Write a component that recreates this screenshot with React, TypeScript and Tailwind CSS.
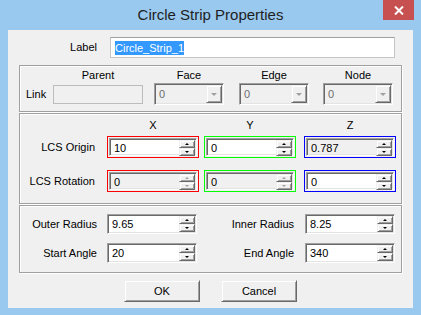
import React from 'react';

const font = { fontFamily: '"Liberation Sans", Arial, sans-serif' };

const sunken =
  'border border-t-[#a0a0a0] border-l-[#a0a0a0] border-r-white border-b-white shadow-[inset_1px_1px_0_#696969,inset_-1px_-1px_0_#e3e3e3]';

const raised =
  'border border-t-[#f0f0f0] border-l-[#f0f0f0] border-r-[#696969] border-b-[#696969] shadow-[inset_1px_1px_0_#ffffff,inset_-1px_-1px_0_#a0a0a0] bg-[#f0f0f0]';

const Arrow = ({ up, off }: { up?: boolean; off?: boolean }) => (
  <span
    className={
      up
        ? `w-0 h-0 border-x-[2px] border-x-transparent border-b-[2px] ${off ? 'border-b-[#a0a0a0]' : 'border-b-black'}`
        : `w-0 h-0 border-x-[2px] border-x-transparent border-t-[2px] ${off ? 'border-t-[#a0a0a0]' : 'border-t-black'}`
    }
  />
);

const Spinner = ({ off }: { off?: boolean }) => (
  <div className="flex flex-col w-[16px] h-[16px] mr-[1px] mt-[1px]">
    <div className={`${raised} h-[8px] flex items-center justify-center`}>
      <Arrow up off={off} />
    </div>
    <div className={`${raised} h-[8px] flex items-center justify-center`}>
      <Arrow off={off} />
    </div>
  </div>
);

const SpinField = ({
  value,
  gray,
  off,
  w,
}: {
  value: string;
  gray?: boolean;
  off?: boolean;
  w: string;
}) => (
  <div className={`${sunken} ${w} h-full flex items-start ${gray ? 'bg-[#f0f0f0]' : 'bg-white'}`}>
    <span className="flex-1 pl-[4px] leading-[18px] text-black">{value}</span>
    <Spinner off={off} />
  </div>
);

const Boxed = ({
  color,
  value,
  gray,
  off,
  className = '',
}: {
  color: string;
  value: string;
  gray?: boolean;
  off?: boolean;
  className?: string;
}) => (
  <div className={`w-[92px] h-[22px] border p-[1px] ${color} ${className}`}>
    <SpinField value={value} gray={gray} off={off} w="w-full" />
  </div>
);

const Combo = ({ className = '' }: { className?: string }) => (
  <div className={`${sunken} w-[70px] h-[22px] bg-[#f0f0f0] flex items-stretch p-[1px] ${className}`}>
    <span className="flex-1 pl-[3px] leading-[18px] text-[#6d6d6d]">0</span>
    <div className={`${raised} w-[16px] flex items-center justify-center`}>
      <span className="w-0 h-0 border-x-[3px] border-x-transparent border-t-[3px] border-t-[#a0a0a0]" />
    </div>
  </div>
);

const groupBox = 'ml-[11px] w-[383px] border border-[#a0a0a0] shadow-[inset_1px_1px_0_#ffffff,1px_1px_0_#ffffff]';

export default function App() {
  return (
    <div className="w-[421px] h-[315px] bg-[#99c9ef] flex flex-col text-[11px] text-black" style={font}>
      {/* title bar */}
      <div className="relative h-[30px] flex items-center justify-center">
        <span className="text-[15px] text-[#1e1e1e] mt-[1px]">Circle Strip Properties</span>
        <div className="absolute right-[7px] top-0 w-[31px] h-[20px] bg-[#c75050] flex items-center justify-center">
          <svg width="10" height="9" viewBox="0 0 10 9">
            <path d="M1 0.5 L9 8.5 M9 0.5 L1 8.5" stroke="#fff" strokeWidth="2" />
          </svg>
        </div>
      </div>

      {/* client */}
      <div className="mx-[8px] h-[278px] bg-[#f0f0f0] flex flex-col">
        {/* label */}
        <div className="mt-[7px] flex items-center h-[21px]">
          <span className="w-[89px] text-right">Label</span>
          <div className="ml-[13px] w-[285px] h-[21px] bg-white border border-[#c5c5c5] border-t-[#a0a0a0] flex items-center pl-[4px]">
            <span className="bg-[#3399ff] text-white leading-[14px]">Circle_Strip_1</span>
          </div>
        </div>

        {/* link group */}
        <div className={`${groupBox} mt-[7px] h-[47px]`}>
          <div className="flex pl-[33px] pt-[3px] h-[17px] leading-[13px]">
            <span className="w-[90px] text-center">Parent</span>
            <span className="w-[70px] ml-[11px] text-center">Face</span>
            <span className="w-[70px] ml-[15px] text-center">Edge</span>
            <span className="w-[70px] ml-[14px] text-center">Node</span>
          </div>
          <div className="flex items-center h-[22px]">
            <span className="pl-[6px] w-[33px]">Link</span>
            <div className="w-[90px] h-[19px] border border-[#bcbcbc] bg-[#f0f0f0]" />
            <Combo className="ml-[11px]" />
            <Combo className="ml-[15px]" />
            <Combo className="ml-[14px]" />
          </div>
        </div>

        {/* LCS group */}
        <div className={`${groupBox} mt-[1px] h-[91px]`}>
          <div className="flex items-center h-[22px] pl-[87px]">
            <span className="w-[92px] text-center">X</span>
            <span className="w-[92px] ml-[5px] text-center">Y</span>
            <span className="w-[92px] ml-[8px] text-center">Z</span>
          </div>
          <div className="flex items-center h-[22px]">
            <span className="w-[75px] text-right">LCS Origin</span>
            <Boxed className="ml-[12px]" color="border-[#ff0000]" value="10" />
            <Boxed className="ml-[5px]" color="border-[#00ff00]" value="0" />
            <Boxed className="ml-[8px]" color="border-[#0000ff]" value="0.787" gray />
          </div>
          <div className="flex items-center h-[22px] mt-[12px]">
            <span className="w-[75px] text-right">LCS Rotation</span>
            <Boxed className="ml-[12px]" color="border-[#ff0000]" value="0" gray off />
            <Boxed className="ml-[5px]" color="border-[#00ff00]" value="0" gray off />
            <Boxed className="ml-[8px]" color="border-[#0000ff]" value="0" />
          </div>
        </div>

        {/* radius group */}
        <div className={`${groupBox} mt-[1px] h-[68px]`}>
          <div className="flex items-center h-[20px] mt-[8px]">
            <span className="w-[77px] text-right">Outer Radius</span>
            <div className="ml-[10px] h-[20px]">
              <SpinField value="9.65" w="w-[90px]" />
            </div>
            <span className="w-[85px] ml-[12px] text-right">Inner Radius</span>
            <div className="ml-[11px] h-[20px]">
              <SpinField value="8.25" w="w-[90px]" />
            </div>
          </div>
          <div className="flex items-center h-[20px] mt-[9px]">
            <span className="w-[77px] text-right">Start Angle</span>
            <div className="ml-[10px] h-[20px]">
              <SpinField value="20" w="w-[90px]" />
            </div>
            <span className="w-[85px] ml-[12px] text-right">End Angle</span>
            <div className="ml-[11px] h-[20px]">
              <SpinField value="340" w="w-[90px]" />
            </div>
          </div>
        </div>

        {/* buttons */}
        <div className="mt-[7px] flex justify-center gap-[21px]">
          <button className={`${raised} w-[76px] h-[22px] text-[11px] text-black`} style={font}>
            OK
          </button>
          <button className={`${raised} w-[76px] h-[22px] text-[11px] text-black`} style={font}>
            Cancel
          </button>
        </div>
      </div>
    </div>
  );
}
